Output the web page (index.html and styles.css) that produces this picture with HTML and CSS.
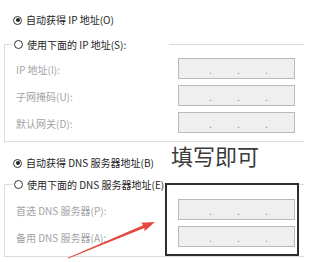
FILE: index.html
```html
<!DOCTYPE html>
<html lang="zh-CN">
<head>
<meta charset="utf-8">
<title>IP 设置</title>
<link rel="stylesheet" href="styles.css">
</head>
<body>
<div class="page">
  <div class="radio-row top-row"><span class="radio checked"></span><span class="rlabel">自动获得 IP 地址(O)</span></div>

  <div class="group group-ip">
    <div class="group-title title-ip"><span class="radio"></span><span class="rlabel">使用下面的 IP 地址(S):</span></div>
    <div class="rows">
      <div class="row"><span class="flabel">IP 地址(I):</span><div class="ipbox"><span>.</span><span>.</span><span>.</span></div></div>
      <div class="row"><span class="flabel">子网掩码(U):</span><div class="ipbox"><span>.</span><span>.</span><span>.</span></div></div>
      <div class="row"><span class="flabel">默认网关(D):</span><div class="ipbox"><span>.</span><span>.</span><span>.</span></div></div>
    </div>
  </div>

  <div class="radio-row dns-row"><span class="radio checked"></span><span class="rlabel">自动获得 DNS 服务器地址(B)</span></div>

  <div class="group group-dns">
    <div class="group-title"><span class="radio"></span><span class="rlabel">使用下面的 DNS 服务器地址(E):</span></div>
    <div class="rows rows-dns">
      <div class="row"><span class="flabel">首选 DNS 服务器(P):</span><div class="ipbox"><span>.</span><span>.</span><span>.</span></div></div>
      <div class="row"><span class="flabel">备用 DNS 服务器(A):</span><div class="ipbox"><span>.</span><span>.</span><span>.</span></div></div>
    </div>
  </div>
</div>

<div class="note">填写即可</div>
<div class="highlight"></div>
<svg class="arrow" width="304" height="262" viewBox="0 0 304 262" xmlns="http://www.w3.org/2000/svg">
  <g transform="translate(68 258) rotate(-22.5)">
    <polygon points="0,-0.4 82,-1.6 81,-4.6 94,0 81,4.6 82,1.6 0,0.6" fill="#e5483a"/>
  </g>
</svg>
</body>
</html>
```

FILE: styles.css
```css
html, body {
  margin: 0;
  padding: 0;
  background: #ffffff;
  width: 304px;
  height: 262px;
  overflow: hidden;
}

body {
  position: relative;
  font-family: "Noto Sans CJK SC", "Noto Sans", sans-serif;
  font-size: 10px;
  line-height: 14px;
  color: #1e1e1e;
}

.page {
  padding: 13px 0 0 4px;
}

.radio-row {
  display: flex;
  align-items: center;
  height: 14px;
  margin-left: 9px;
}

.dns-row {
  margin-top: 14px;
}

.radio {
  width: 7px;
  height: 7px;
  border: 1px solid #333333;
  border-radius: 50%;
  position: relative;
  flex: none;
  background: #ffffff;
}

.radio.checked::after {
  content: "";
  position: absolute;
  left: 1.5px;
  top: 1.5px;
  width: 4px;
  height: 4px;
  border-radius: 50%;
  background: #1e1e1e;
}

.rlabel {
  margin-left: 4px;
  white-space: nowrap;
}

.group {
  border: 1px solid #dcdcdc;
  border-right: none;
  padding: 0 0 8px 11px;
}

.group-ip {
  margin-top: 17px;
}

.group-dns {
  margin-top: 14px;
  padding-bottom: 9px;
}

.group-title {
  display: flex;
  align-items: center;
  height: 15px;
  margin: -8px 0 0 -3px;
  padding: 0 4px 0 1px;
  background: #ffffff;
  width: fit-content;
}

.title-ip {
  width: 151px;
}

.rows {
  display: flex;
  flex-direction: column;
  gap: 6px;
  margin-top: 6px;
}

.rows-dns {
  margin-top: 7px;
}

.row {
  display: grid;
  grid-template-columns: 162px 117px;
  align-items: center;
}

.flabel {
  color: #a3a3a3;
  white-space: nowrap;
  padding-top: 2px;
}

.ipbox {
  height: 19px;
  border: 1px solid #b9b9b9;
  background: #efefef;
  display: flex;
  align-items: center;
  padding: 2px 0 0 30px;
  box-sizing: border-box;
  height: 21px;
  color: #8a8a8a;
}

.ipbox span {
  width: 28px;
  flex: none;
}

.note {
  position: absolute;
  left: 171px;
  top: 144px;
  font-size: 22px;
  line-height: 22px;
  color: #3b3b3b;
  white-space: nowrap;
}

.highlight {
  position: absolute;
  left: 165px;
  top: 183px;
  width: 130px;
  height: 69px;
  border: 2px solid #2e2e2e;
}

.arrow {
  position: absolute;
  left: 0;
  top: 0;
  pointer-events: none;
}
```
